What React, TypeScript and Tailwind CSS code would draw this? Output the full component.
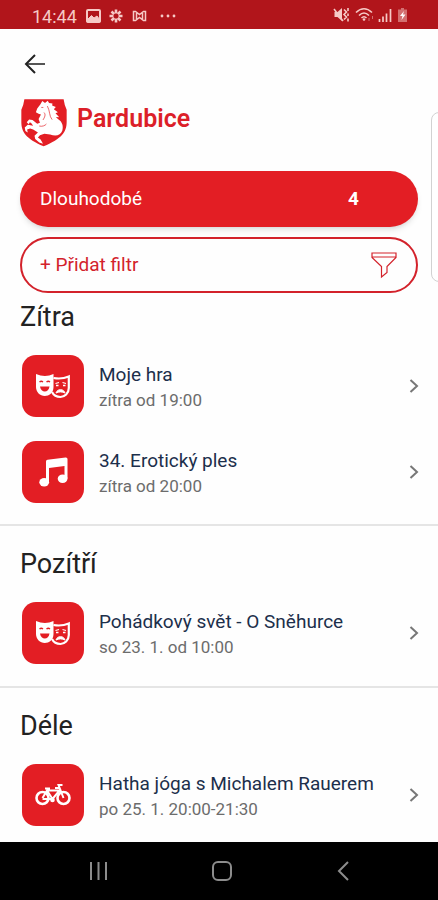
import React from 'react';

type Kind = 'theatre' | 'music' | 'bike';
type EventItem = { title: string; time: string; kind: Kind };
type Group = { heading: string; events: EventItem[] };

const groups: Group[] = [
  {
    heading: 'Zítra',
    events: [
      { title: 'Moje hra', time: 'zítra od 19:00', kind: 'theatre' },
      { title: '34. Erotický ples', time: 'zítra od 20:00', kind: 'music' },
    ],
  },
  {
    heading: 'Pozítří',
    events: [{ title: 'Pohádkový svět - O Sněhurce', time: 'so 23. 1. od 10:00', kind: 'theatre' }],
  },
  {
    heading: 'Déle',
    events: [{ title: 'Hatha jóga s Michalem Rauerem', time: 'po 25. 1. 20:00-21:30', kind: 'bike' }],
  },
];

function TheatreIcon() {
  return (
    <svg width="36" height="26" viewBox="0 0 36 26" fill="none" aria-hidden="true">
      <path d="M18.500 5C24 6 29 5.500 33.800 3.500V15C33.800 20.500 29.500 24 25.500 24C21.500 24 18.500 22 17 19" stroke="#fff" strokeWidth="2.200" />
      <path d="M1 1C7 3.500 13 3.500 18.500 1V14C18.500 20 14 23 9.800 23C5 23 1 19 1 14Z" fill="#fff" />
      <path d="M4.500 9Q6.300 7.500 8 9M11.500 9Q13.300 7.500 15 9" stroke="#e31e24" strokeWidth="1.300" />
      <path d="M5 13.500H14.500C14 17 12 18.500 9.800 18.500C7.500 18.500 5.500 17 5 13.500Z" fill="#e31e24" />
      <path d="M20.500 10.500L24 9.500M27.500 9.500L31 10.500M21 12.500H23.500M28 12.500H30.500" stroke="#fff" strokeWidth="1.300" />
      <path d="M21 20C22 15.500 29 15.500 30 20C27 18.500 24 18.500 21 20Z" fill="#fff" stroke="#fff" />
    </svg>
  );
}

function MusicIcon() {
  return (
    <svg width="32" height="32" viewBox="0 0 32 32" fill="#fff" aria-hidden="true">
      <path d="M9 5.500Q9 4 10.500 3.800L28.500 1.500Q30.500 1.300 30.500 3V22.500H27.500V10L12 12V26H9Z" />
      <ellipse cx="7.200" cy="26.300" rx="4.900" ry="4.200" />
      <ellipse cx="25.600" cy="22.800" rx="4.900" ry="4.200" />
    </svg>
  );
}

function BikeIcon() {
  return (
    <svg width="36" height="24" viewBox="0 0 36 24" fill="none" stroke="#fff" strokeWidth="2" aria-hidden="true">
      <circle cx="7.500" cy="15" r="6" strokeWidth="2.600" />
      <circle cx="28.500" cy="15" r="6" strokeWidth="2.600" />
      <path d="M7.500 15L12 7.500H24.500L17.500 16H7.500M12 7.500L17.500 16M28.500 15L23.500 2H27.500M10 5.500H15M12.500 5.500V8M20 5H24" />
      <circle cx="17.500" cy="17" r="2.300" fill="#fff" stroke="none" />
    </svg>
  );
}

const icons: Record<Kind, () => React.JSX.Element> = {
  theatre: TheatreIcon,
  music: MusicIcon,
  bike: BikeIcon,
};

function Crest() {
  return (
    <svg width="46" height="48" viewBox="63 41 136 140" aria-hidden="true">
      <path d="M73 41H189Q191 57 198 72V108C198 137 184 157 130 180C77 157 64 137 64 108V72Q71 57 73 41Z" fill="#e31e24" />
      <path
        d="M126 46L134 52L142 45L146 52L156 53L155 59L166 64L160 70L172 79L165 82L176 94L166 93L174 101C185 108 189 121 185 134C180 148 166 151 149 145L132 143L119 147L113 154L121 160L128 172L117 169L105 158L103 149L113 139L99 130L90 127L81 130L83 139L76 135L74 124L83 116L99 119L93 111L89 109L86 115L80 109L87 101L97 102L111 113L119 110L115 99L122 86L115 84L107 79L111 68L120 56Z"
        fill="#fff"
      />
      <path d="M123 65L129 65M141 61C149 75 146 91 155 101M131 80C137 86 133 94 128 102M117 120C126 122 134 119 138 114" fill="none" stroke="#e31e24" strokeWidth="2" />
    </svg>
  );
}

function StatusBar() {
  return (
    <div className="flex h-[29px] items-center justify-between bg-[#b1151b] pr-[30px] pl-8 text-[#f6c9c6]">
      <div className="flex items-center pt-1">
        <span className="w-[53px] text-[18px] leading-6">14:44</span>
        <svg width="94" height="18" viewBox="0 0 94 18" fill="none" stroke="currentColor" aria-hidden="true">
          <rect x="2" y="2" width="13" height="12" rx="1" strokeWidth="2" />
          <path d="M2 12L6.500 7.500L9 10L12 8L15 12V14H2Z" fill="currentColor" />
          <path d="M31 1.500V5.500M31 10.500V14.500M24.500 8H28.500M33.500 8H37.500M26.500 3.500L29.200 6.200M32.800 9.800L35.500 12.500M35.500 3.500L32.800 6.200M29.200 9.800L26.500 12.500" strokeWidth="2.600" />
          <path d="M48.500 3.500V12.500H50.500L54.500 9.500L58.500 12.500H60.500V3.500H58.500L54.500 6.500L50.500 3.500ZM51.500 5V12M57.500 5V12" strokeWidth="1.500" />
          <g fill="currentColor" stroke="none">
            <circle cx="77" cy="8" r="1.400" />
            <circle cx="83" cy="8" r="1.400" />
            <circle cx="89" cy="8" r="1.400" />
          </g>
        </svg>
      </div>
      <svg width="75" height="18" viewBox="0 0 75 18" fill="none" stroke="currentColor" aria-hidden="true">
        <path d="M1.500 6H4.500L9 2V15L4.500 11H1.500Z" fill="currentColor" stroke="none" />
        <path d="M1 3L10 15" strokeWidth="1.500" />
        <path d="M11 3.500L13.500 6L11 8.500L13.500 11L11 13.500M15 2V5M15 7.500V10M15 12.500V15.500" strokeWidth="1.600" />
        <path d="M23 6.500Q31 -1 39 6.500M26 9.500Q31 4.500 36 9.500M28.500 12Q31 9.500 33.500 12" strokeWidth="1.600" />
        <circle cx="31" cy="13.500" r="1.300" fill="currentColor" stroke="none" />
        <path d="M36 12V15M39.500 10V13" strokeWidth="1" opacity=".5" />
        <path d="M46.500 13V16M50 10.500V16M53.500 7.500V16M57.500 3V16" strokeWidth="1.700" />
        <path d="M68 2H71V3.500H74V16H65V3.500H68Z" fill="currentColor" stroke="none" opacity=".5" />
        <path d="M71 5L67 10H69.500L68.500 14L72.500 8.500H70Z" fill="#fff" stroke="none" />
      </svg>
    </div>
  );
}

function EventRow({ item }: { item: EventItem }) {
  const Icon = icons[item.kind];
  return (
    <li>
      <a href="#" className="flex items-center pr-[18px] pl-[22px]">
        <span className="flex size-[62px] shrink-0 items-center justify-center rounded-[14px] bg-[#e31e24]">
          <Icon />
        </span>
        <span className="ml-[15px] flex min-w-0 flex-1 flex-col pt-1">
          <span className="text-[19px] leading-6 text-[#1c2f4b]">{item.title}</span>
          <span className="text-[17px] leading-[26px] text-[#6c6c6c]">{item.time}</span>
        </span>
        <svg width="12" height="18" viewBox="0 0 12 18" fill="none" stroke="#777" strokeWidth="2" aria-hidden="true">
          <path d="M2.500 3L9 9L2.500 15" />
        </svg>
      </a>
    </li>
  );
}

export default function App() {
  return (
    <div className="relative flex min-h-screen flex-col overflow-hidden bg-[#fefefe] font-[Roboto,sans-serif]">
      <StatusBar />
      <header>
        <div className="flex h-[70px] items-center pl-6">
          <button type="button" aria-label="Zpět">
            <svg width="22" height="20" viewBox="0 0 22 20" fill="none" stroke="#222" strokeWidth="2" aria-hidden="true">
              <path d="M3 10H21" stroke="#555" />
              <path d="M11 1L2 10L11 19" />
            </svg>
          </button>
        </div>
        <div className="flex h-[72px] items-start gap-[10px] pl-[21px]">
          <Crest />
          <h1 className="text-[25px] leading-10 font-semibold text-[#dc1f29]">Pardubice</h1>
        </div>
      </header>
      <main className="flex-1">
        <div className="flex flex-col gap-[10px] px-5">
          <button
            type="button"
            className="flex h-14 items-center justify-between rounded-full bg-[#e31e24] pr-[59px] pl-5 text-[19px] text-white shadow-md"
          >
            <span>Dlouhodobé</span>
            <span className="font-bold">4</span>
          </button>
          <button
            type="button"
            className="flex h-14 items-center justify-between rounded-full border-2 border-[#d3222b] pr-[18px] pl-[18px] text-[19px] text-[#d3222b]"
          >
            <span>+ Přidat filtr</span>
            <svg width="28" height="28" viewBox="0 0 28 28" fill="none" stroke="#d3222b" strokeWidth="1.200" aria-hidden="true">
              <path d="M2 2H26V6.500L17 15.500V21.500L11.500 26V15.500L2 6.500ZM2 6H26" />
            </svg>
          </button>
        </div>
        {groups.map((group, index) => (
          <section
            key={group.heading}
            className={index === 0 ? 'pt-2 pb-[21px]' : 'border-t-2 border-[#e5e5e5] pt-[22px] pb-[22px] last:pb-4'}
          >
            <h2 className="mb-[22px] pl-5 text-[27px] leading-8 text-[#222]">{group.heading}</h2>
            <ul className="flex flex-col gap-6">
              {group.events.map((item) => (
                <EventRow key={item.title} item={item} />
              ))}
            </ul>
          </section>
        ))}
      </main>
      <div className="absolute top-[112px] -right-2 h-[170px] w-[15px] rounded-l-lg border border-[#d2d2d2] bg-white" />
      <nav className="flex h-[58px] items-center justify-between bg-black pr-[85px] pl-[86px] text-[#8c8c8c]">
        <button type="button" aria-label="Poslední aplikace">
          <svg width="24" height="24" viewBox="0 0 24 24" stroke="currentColor" strokeWidth="2" aria-hidden="true">
            <path d="M5 3V21M12.500 3V21M20 3V21" />
          </svg>
        </button>
        <button type="button" aria-label="Domů">
          <svg width="24" height="24" viewBox="0 0 24 24" fill="none" stroke="currentColor" strokeWidth="2" aria-hidden="true">
            <rect x="3" y="3" width="18" height="18" rx="5" />
          </svg>
        </button>
        <button type="button" aria-label="Zpět v systému">
          <svg width="20" height="24" viewBox="0 0 20 24" fill="none" stroke="currentColor" strokeWidth="2" aria-hidden="true">
            <path d="M15 3L6 12L15 21" />
          </svg>
        </button>
      </nav>
    </div>
  );
}
